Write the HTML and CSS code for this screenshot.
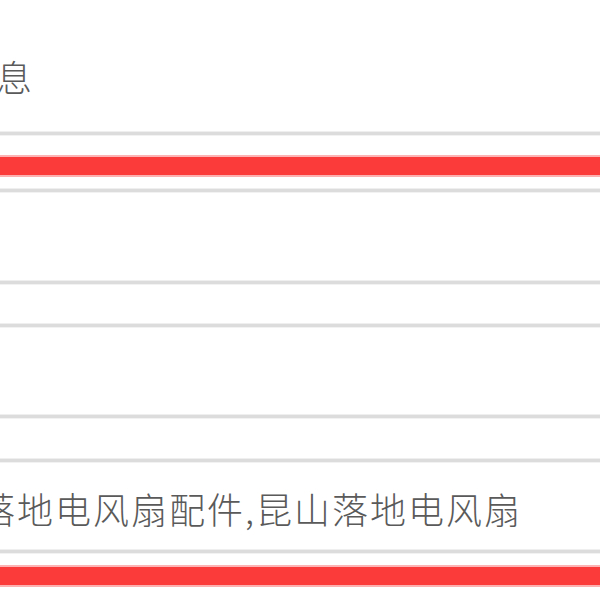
FILE: index.html
```html
<!DOCTYPE html>
<html lang="zh-CN">
<head>
<meta charset="utf-8">
<title>基本信息</title>
<link rel="stylesheet" href="styles.css">
</head>
<body>
<div class="page">
  <div class="head-row"><span class="head-text">基本信息</span></div>
  <div class="rule"></div>
  <div class="gap g19"></div>
  <div class="red-bar"></div>
  <div class="gap g11"></div>
  <div class="rule"></div>
  <div class="row r87"></div>
  <div class="rule"></div>
  <div class="gap g38"></div>
  <div class="rule"></div>
  <div class="row r86"></div>
  <div class="rule"></div>
  <div class="gap g39"></div>
  <div class="rule"></div>
  <div class="row r86"><span class="row-text">落地电风扇配件,昆山落地电风扇</span></div>
  <div class="rule"></div>
  <div class="gap g11"></div>
  <div class="red-bar"></div>
</div>
</body>
</html>
```

FILE: styles.css
```css
html, body {
  margin: 0;
  padding: 0;
  background: #ffffff;
}
.page {
  width: 600px;
  overflow: hidden;
  font-family: "Noto Sans CJK SC", "Liberation Sans", sans-serif;
  color: #5a5a5a;
  font-weight: 300;
}
.head-row {
  height: 131px;
  display: flex;
  align-items: flex-start;
  white-space: nowrap;
}
.head-text {
  font-size: 36px;
  line-height: 36px;
  letter-spacing: 2px;
  margin-top: 58px;
  margin-left: -118px;
}
.rule {
  height: 3px;
  background: #dcdcdc;
  border-top: 1px solid #efefef;
  border-bottom: 1px solid #f2f2f2;
}
.red-bar {
  height: 18px;
  background: #fb3a3a;
  border-top: 2px solid #fdb3b3;
  border-bottom: 2px solid #fdb0b0;
}
.gap { height: 10px; }
.g11 { height: 11px; }
.g19 { height: 19px; }
.g38 { height: 38px; }
.g39 { height: 39px; }
.row {
  display: flex;
  align-items: center;
  white-space: nowrap;
}
.r86 { height: 86px; }
.r87 { height: 87px; }
.row-text {
  font-size: 36px;
  line-height: 36px;
  letter-spacing: 2px;
  margin-top: 4px;
  margin-left: -21px;
}
```
